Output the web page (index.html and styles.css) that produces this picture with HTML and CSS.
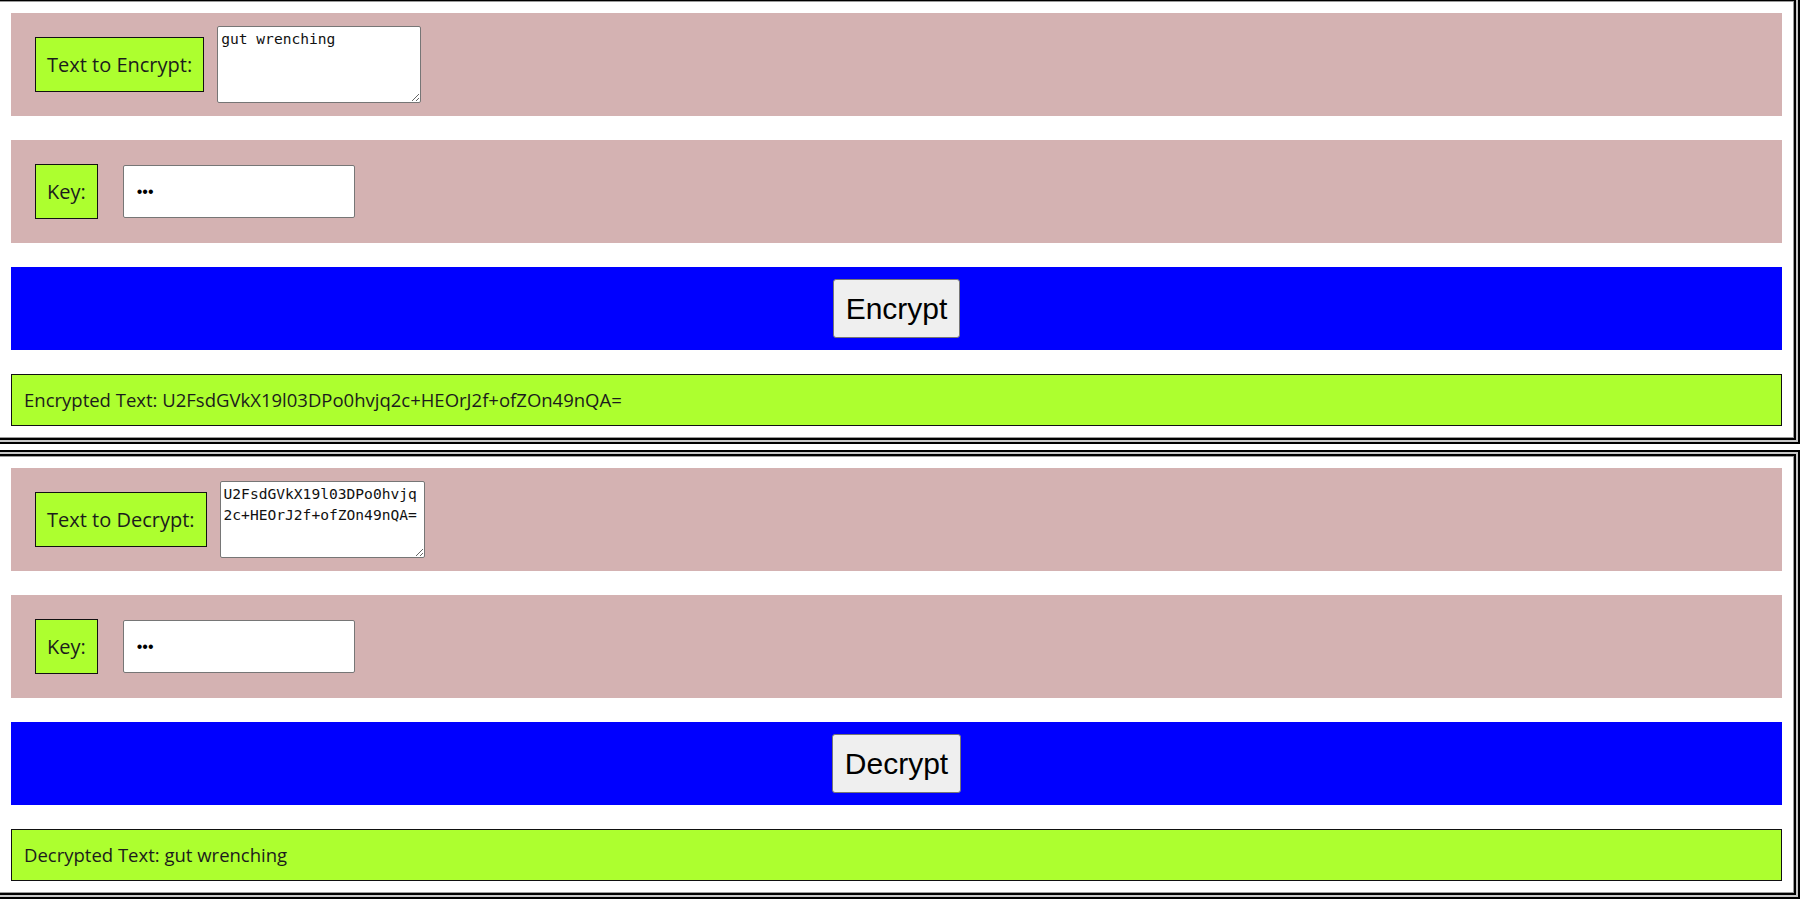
FILE: index.html
```html
<!DOCTYPE html>
<html>
<head>
<meta charset="utf-8">
<title>Encrypt / Decrypt</title>
<link rel="stylesheet" href="styles.css">
</head>
<body>
<div class="panel panel-first">
  <div class="row">
    <label class="tag" for="plain">Text to Encrypt:</label>
    <textarea id="plain" class="area area-enc">gut wrenching</textarea>
  </div>
  <div class="row">
    <label class="tag" for="key1">Key:</label>
    <input id="key1" class="key" type="password" value="abc">
  </div>
  <div class="bar">
    <button class="btn">Encrypt</button>
  </div>
  <div class="result">Encrypted Text: U2FsdGVkX19l03DPo0hvjq2c+HEOrJ2f+ofZOn49nQA=</div>
</div>
<div class="panel panel-second">
  <div class="row">
    <label class="tag" for="cipher">Text to Decrypt:</label>
    <textarea id="cipher" class="area area-dec">U2FsdGVkX19l03DPo0hvjq2c+HEOrJ2f+ofZOn49nQA=</textarea>
  </div>
  <div class="row">
    <label class="tag" for="key2">Key:</label>
    <input id="key2" class="key" type="password" value="abc">
  </div>
  <div class="bar">
    <button class="btn">Decrypt</button>
  </div>
  <div class="result">Decrypted Text: gut wrenching</div>
</div>
</body>
</html>
```

FILE: styles.css
```css
* { box-sizing: border-box; }
html, body {
  margin: 0;
  padding: 0;
  background: #fff;
  overflow: hidden;
}
body {
  font-family: "Open Sans", "Noto Sans", sans-serif;
  color: #1c1c1c;
}
.panel {
  padding: 18px;
  display: flex;
  flex-direction: column;
  gap: 24px;
  box-shadow:
    inset 0 0 0 2px #000,
    inset 0 0 0 4px #c8c8c8,
    inset 0 0 0 6px #000,
    inset 0 0 0 7px #9a9a9a;
}
.panel-first { margin: -5px 0 0 -7px; }
.panel-second { margin: 6px 0 0 -7px; }
.row {
  background: #d4b2b2;
  height: 103px;
  display: flex;
  align-items: center;
  padding-left: 24px;
}
.tag {
  background: #adff2f;
  border: 1px solid #111;
  font-size: 20px;
  line-height: 27px;
  padding: 13px 11px;
  display: block;
}
.area {
  width: 204px;
  height: 77px;
  margin-left: 13px;
  font-family: "DejaVu Sans Mono", "Liberation Mono", monospace;
  font-size: 14.6px;
  line-height: 21px;
  padding: 1px 3px 3px;
  border: 1px solid #767676;
  border-radius: 2px;
  color: #111;
  background: #fff;
  resize: both;
  overflow: hidden;
}
.area-dec { width: 205px; }
.key {
  width: 232px;
  height: 53px;
  margin-left: 25px;
  padding: 0 13px;
  font-family: "Liberation Sans", Arial, sans-serif;
  font-size: 16px;
  border: 1px solid #767676;
  border-radius: 2px;
  background: #fff;
  color: #000;
}
.bar {
  background: #0000ff;
  height: 83px;
  display: flex;
  align-items: center;
  justify-content: center;
}
.btn {
  height: 59px;
  padding: 0 12px;
  font-family: "Liberation Sans", Arial, sans-serif;
  font-size: 30px;
  color: #000;
  background: #efefef;
  border: 1px solid #767676;
  border-radius: 3px;
}
.result {
  background: #adff2f;
  border: 1px solid #111;
  font-size: 18.5px;
  line-height: 24px;
  padding: 13px 12px;
}
```
